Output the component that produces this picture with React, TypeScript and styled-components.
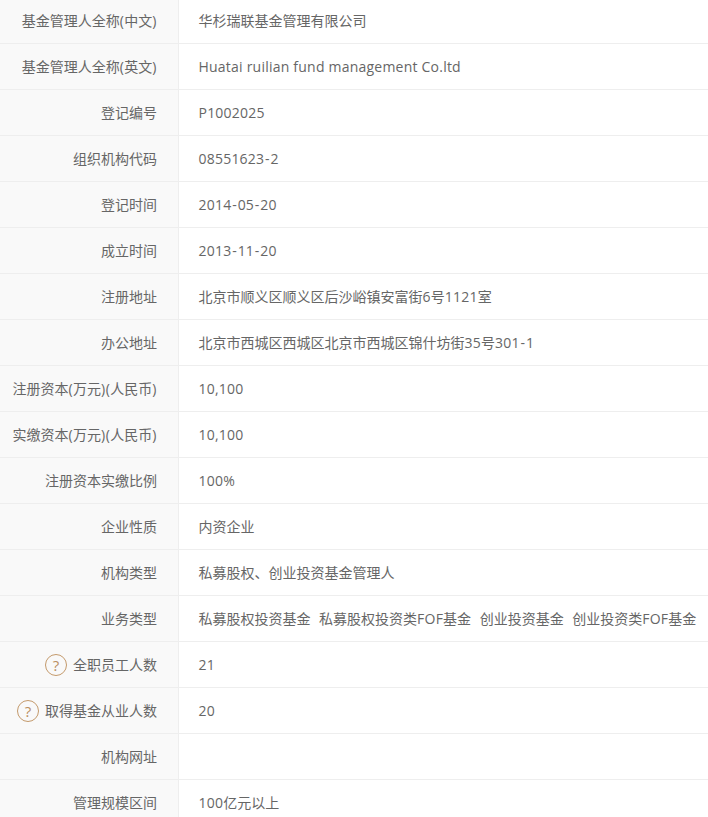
import React from "react";
import styled, { createGlobalStyle } from "styled-components";

const Global = createGlobalStyle`
  html, body { margin: 0; padding: 0; background: #fff; overflow: hidden; }
  body { font-family: "Open Sans", "Noto Sans CJK SC", sans-serif; }
`;

const Table = styled.div`
  width: 708px;
  margin-top: -2px;
  display: flex;
  flex-direction: column;
`;

const Row = styled.div`
  display: grid;
  grid-template-columns: 179px 1fr;
  height: 46px;
  box-sizing: border-box;
  border-bottom: 1px solid #eee;
`;

const Latin = styled.span`
  letter-spacing: 0.22px;
`;

const Dash = styled.span`
  margin: 0 0.75px;
`;

const Label = styled.div`
  background: #f9f9f9;
  border-right: 1px solid #eee;
  display: flex;
  align-items: center;
  justify-content: flex-end;
  padding: 0 21px 2px 0;
  font-size: 14px;
  color: #666;
  white-space: nowrap;

  ${Latin} {
    letter-spacing: 0.5px;
  }
`;

const Value = styled.div<{ $cjk?: boolean }>`
  display: flex;
  align-items: center;
  padding: 0 0 ${(p) => (p.$cjk ? "2px" : "0")} 19.5px;
  font-size: 14px;
  color: #666;
  white-space: nowrap;
`;

const Tag = styled.span`
  margin-right: 8.6px;
`;

const Help = styled.span`
  width: 20px;
  height: 20px;
  border: 1px solid #c49a6c;
  border-radius: 50%;
  margin: 2px 6px 0 0;
  display: flex;
  align-items: center;
  justify-content: center;
  font-size: 15px;
  color: #b98f60;
  flex: none;
`;

function Text({ children }: { children: string }) {
  const parts = children.split(/([\x20-\x7e]+)/).filter(Boolean);
  return (
    <span>
      {parts.map((p, i) =>
        /^[\x20-\x7e]+$/.test(p) ? (
          <Latin key={i}>
            {p.split(/(-)/).map((s, j) => (s === "-" ? <Dash key={j}>-</Dash> : s))}
          </Latin>
        ) : (
          p
        ),
      )}
    </span>
  );
}

type Item = { label: string; value?: string; tags?: string[]; help?: boolean };

const items: Item[] = [
  { label: "基金管理人全称(中文)", value: "华杉瑞联基金管理有限公司" },
  { label: "基金管理人全称(英文)", value: "Huatai ruilian fund management Co.ltd" },
  { label: "登记编号", value: "P1002025" },
  { label: "组织机构代码", value: "08551623-2" },
  { label: "登记时间", value: "2014-05-20" },
  { label: "成立时间", value: "2013-11-20" },
  { label: "注册地址", value: "北京市顺义区顺义区后沙峪镇安富街6号1121室" },
  { label: "办公地址", value: "北京市西城区西城区北京市西城区锦什坊街35号301-1" },
  { label: "注册资本(万元)(人民币)", value: "10,100" },
  { label: "实缴资本(万元)(人民币)", value: "10,100" },
  { label: "注册资本实缴比例", value: "100%" },
  { label: "企业性质", value: "内资企业" },
  { label: "机构类型", value: "私募股权、创业投资基金管理人" },
  { label: "业务类型", tags: ["私募股权投资基金", "私募股权投资类FOF基金", "创业投资基金", "创业投资类FOF基金"] },
  { label: "全职员工人数", value: "21", help: true },
  { label: "取得基金从业人数", value: "20", help: true },
  { label: "机构网址", value: "" },
  { label: "管理规模区间", value: "100亿元以上" },
];

const hasCjk = (s: string) => /[^\x20-\x7e]/.test(s);

export default function App() {
  return (
    <>
      <Global />
      <Table>
        {items.map((it) => (
          <Row key={it.label}>
            <Label>
              {it.help && <Help>?</Help>}
              <Text>{it.label}</Text>
            </Label>
            <Value $cjk={!!it.tags || hasCjk(it.value ?? "")}>
              {it.tags ? (
                it.tags.map((t) => (
                  <Tag key={t}>
                    <Text>{t}</Text>
                  </Tag>
                ))
              ) : (
                <Text>{it.value ?? ""}</Text>
              )}
            </Value>
          </Row>
        ))}
      </Table>
    </>
  );
}
